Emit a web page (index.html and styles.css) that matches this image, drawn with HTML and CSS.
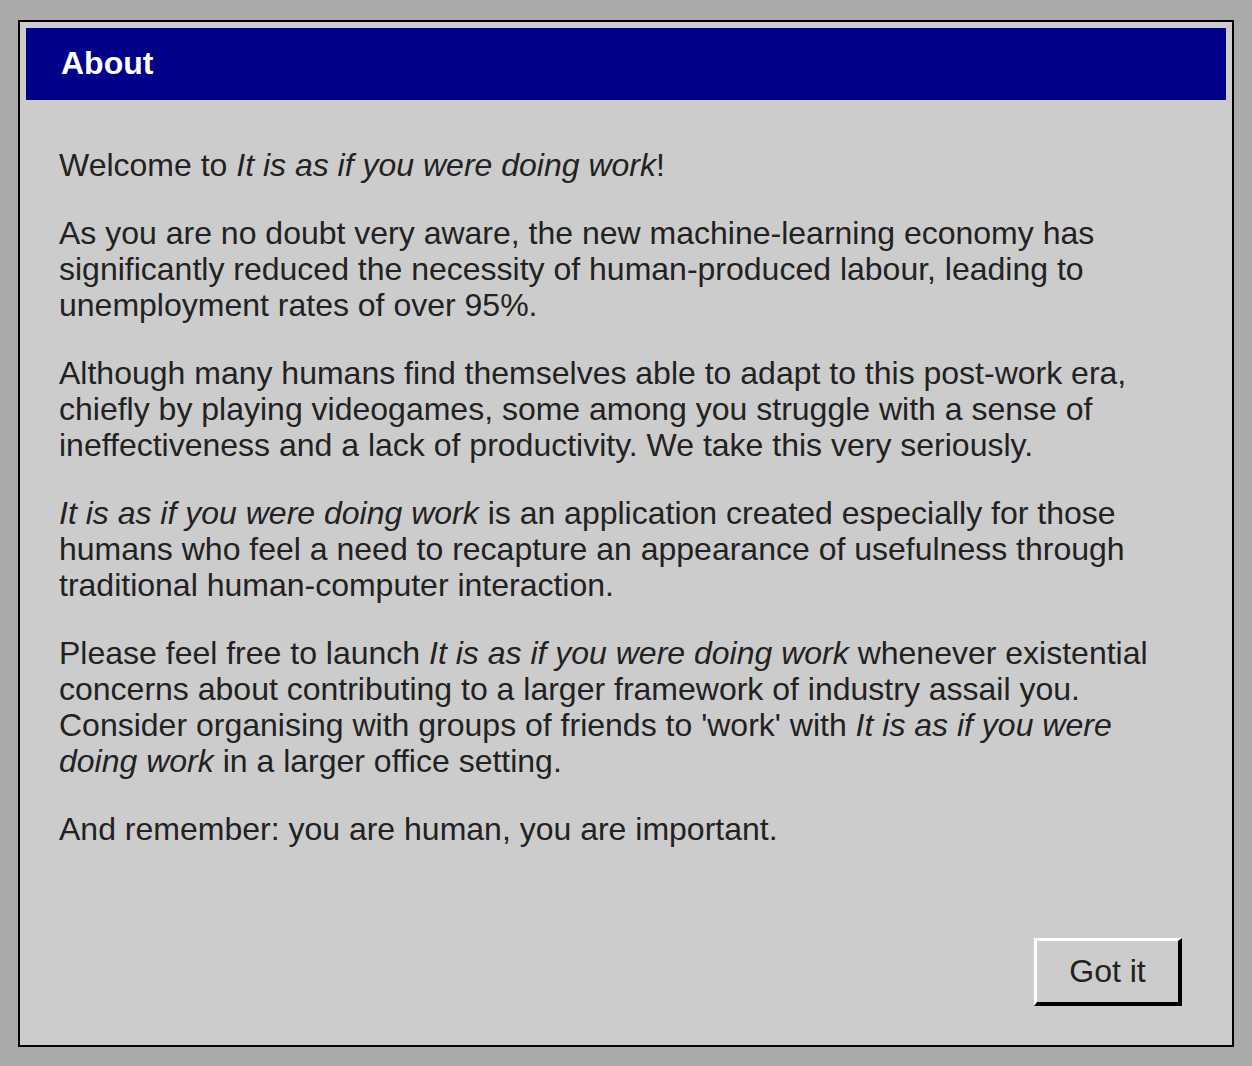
FILE: index.html
```html
<!DOCTYPE html>
<html>
<head>
<meta charset="utf-8">
<link rel="stylesheet" href="styles.css">
</head>
<body>
<div class="dialog">
  <div class="titlebar">About</div>
  <div class="content">
    <p>Welcome to <em>It is as if you were doing work</em>!</p>
    <p>As you are no doubt very aware, the new machine-learning economy has significantly reduced the necessity of human-produced labour, leading to unemployment rates of over 95%.</p>
    <p>Although many humans find themselves able to adapt to this post-work era, chiefly by playing videogames, some among you struggle with a sense of ineffectiveness and a lack of productivity. We take this very seriously.</p>
    <p><em>It is as if you were doing work</em> is an application created especially for those humans who feel a need to recapture an appearance of usefulness through traditional human-computer interaction.</p>
    <p>Please feel free to launch <em>It is as if you were doing work</em> whenever existential concerns about contributing to a larger framework of industry assail you. Consider organising with groups of friends to 'work' with <em>It is as if you were doing work</em> in a larger office setting.</p>
    <p>And remember: you are human, you are important.</p>
  </div>
  <div class="footer">
    <button class="btn">Got it</button>
  </div>
</div>
</body>
</html>
```
FILE: styles.css
```css
html, body {
  margin: 0;
  padding: 0;
}
body {
  background: #aaaaaa;
  font-family: "Liberation Sans", Arial, Helvetica, sans-serif;
  padding: 20px 18px 19px 18px;
  height: 1066px;
  box-sizing: border-box;
}
.dialog {
  box-sizing: border-box;
  height: 1027px;
  border: 2px solid #000;
  background: #cccccc;
  padding: 6px;
  display: flex;
  flex-direction: column;
}
.titlebar {
  background: #000088;
  color: #fff;
  font-weight: bold;
  font-size: 32px;
  height: 72px;
  box-sizing: border-box;
  padding-left: 35px;
  padding-bottom: 2px;
  display: flex;
  align-items: center;
}
.content {
  flex: 1;
  padding: 47px 33px 0 33px;
  color: #222;
  font-size: 32px;
  line-height: 36px;
}
.content p {
  margin: 0 0 32px 0;
}
.footer {
  display: flex;
  justify-content: flex-end;
  padding: 0 44px 33px 0;
}
.btn {
  width: 148px;
  height: 68px;
  box-sizing: border-box;
  background: #cccccc;
  color: #222;
  font-family: "Liberation Sans", Arial, Helvetica, sans-serif;
  font-size: 32px;
  border-style: solid;
  border-width: 3px 4px 4px 3px;
  border-color: #fff #000 #000 #fff;
  padding: 0;
}
```
